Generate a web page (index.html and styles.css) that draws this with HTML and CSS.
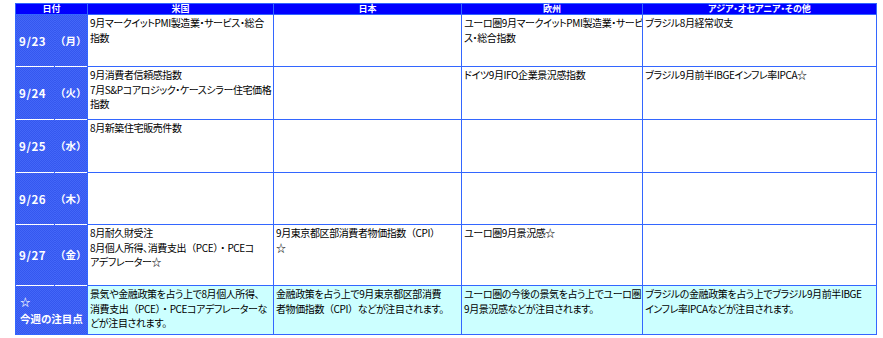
FILE: index.html
```html
<!DOCTYPE html>
<html lang="ja">
<head>
<meta charset="utf-8">
<title>今週の主要経済指標</title>
<link rel="stylesheet" href="styles.css">
</head>
<body>
<table class="cal">
  <colgroup>
    <col class="c-d"><col class="c-w"><col class="c-us"><col class="c-jp"><col class="c-eu"><col class="c-as">
  </colgroup>
  <thead>
    <tr class="hd"><th colspan="2">日付</th><th>米国</th><th>日本</th><th>欧州</th><th>アジア・オセアニア・その他</th></tr>
  </thead>
  <tbody>
    <tr class="r52">
      <td class="d">9/23</td><td class="w">（月）</td>
      <td>9月マークイットPMI製造業・サービス・総合<br>指数</td>
      <td></td>
      <td>ユーロ圏9月マークイットPMI製造業・サービ<br>ス・総合指数</td>
      <td>ブラジル8月経常収支</td>
    </tr>
    <tr class="r53">
      <td class="d">9/24</td><td class="w">（火）</td>
      <td>9月消費者信頼感指数<br>7月S&amp;Pコアロジック・ケースシラー住宅価格<br>指数</td>
      <td></td>
      <td>ドイツ9月IFO企業景況感指数</td>
      <td>ブラジル9月前半IBGEインフレ率IPCA☆</td>
    </tr>
    <tr class="r53">
      <td class="d">9/25</td><td class="w">（水）</td>
      <td>8月新築住宅販売件数</td>
      <td></td>
      <td></td>
      <td></td>
    </tr>
    <tr class="r52">
      <td class="d">9/26</td><td class="w">（木）</td>
      <td></td>
      <td></td>
      <td></td>
      <td></td>
    </tr>
    <tr class="r61">
      <td class="d">9/27</td><td class="w">（金）</td>
      <td>8月耐久財受注<br>8月個人所得、消費支出<span class="fw">（PCE）・</span>PCEコ<br>アデフレーター☆</td>
      <td>9月東京都区部消費者物価指数<span class="fw">（CPI）</span><br>☆</td>
      <td>ユーロ圏9月景況感☆</td>
      <td></td>
    </tr>
    <tr class="r49 note">
      <td class="nl" colspan="2">☆<br>今週の注目点</td>
      <td>景気や金融政策を占う上で8月個人所得、<br>消費支出<span class="fw">（PCE）・</span>PCEコアデフレーターな<br>どが注目されます。</td>
      <td>金融政策を占う上で9月東京都区部消費<br>者物価指数<span class="fw">（CPI）</span>などが注目されます。</td>
      <td>ユーロ圏の今後の景気を占う上でユーロ圏<br>9月景況感などが注目されます。</td>
      <td>ブラジルの金融政策を占う上でブラジル9月前半IBGE<br>インフレ率IPCAなどが注目されます。</td>
    </tr>
  </tbody>
</table>
</body>
</html>
```
FILE: styles.css
```css
html, body {
  margin: 0;
  padding: 0;
  background: #ffffff;
}
body {
  padding: 3px 0 0 15px;
  font-family: "Noto Sans CJK JP", "Noto Sans", sans-serif;
}
.cal {
  box-sizing: border-box;
  width: 862px;
  table-layout: fixed;
  border-collapse: separate;
  border-spacing: 0;
  border-top: 1px solid #3366ff;
  border-left: 1px solid #3366ff;
  font-size: 10px;
  line-height: 14.5px;
  letter-spacing: -0.4px;
  font-feature-settings: "palt";
  color: #000;
}
.c-d { width: 39px; }
.c-w { width: 33px; }
.c-us { width: 186px; }
.c-jp { width: 188px; }
.c-eu { width: 181px; }
.c-as { width: 234px; }

.cal th, .cal td {
  box-sizing: border-box;
  border-right: 1px solid #3366ff;
  border-bottom: 1px solid #3366ff;
  padding: 1px 2px 0 2px;
  vertical-align: top;
  text-align: left;
  white-space: nowrap;
  overflow: hidden;
}
.fw {
  font-feature-settings: normal;
}
.hd th {
  height: 11px;
  padding: 0;
  background: #0000ff;
  color: #fff;
  font-size: 9px;
  line-height: 10px;
  font-weight: bold;
  letter-spacing: 0;
  text-align: center;
  vertical-align: middle;
  overflow: visible;
}
.r52 { height: 52px; }
.r53 { height: 53px; }
.r61 { height: 61px; }
.r49 { height: 49px; }

.cal td.d, .cal td.w {
  border-bottom: 0;
  vertical-align: middle;
  color: #fff;
  font-weight: bold;
  font-size: 11.5px;
  font-feature-settings: normal;
  background:
    linear-gradient(#fff, #fff) left bottom / calc(100% - 1px) 1px no-repeat,
    repeating-conic-gradient(#3457ef 0 25%, #4467f8 0 50%) 0 0 / 2px 2px;
}
.cal td.d {
  border-right: 0;
  padding: 0 0 0 3px;
  letter-spacing: 0.6px;
}
.cal td.w {
  padding: 0;
  font-size: 10.5px;
  letter-spacing: 0;
  background:
    linear-gradient(#fff, #fff) left bottom / 100% 1px no-repeat,
    repeating-conic-gradient(#3457ef 0 25%, #4467f8 0 50%) 0 0 / 2px 2px;
}
.note td {
  background: #ccffff;
}
.cal .note td.nl {
  vertical-align: middle;
  color: #fff;
  font-weight: bold;
  font-size: 10.5px;
  line-height: 17px;
  letter-spacing: 0;
  padding: 0 0 0 4px;
  background: repeating-conic-gradient(#3457ef 0 25%, #4467f8 0 50%) 0 0 / 2px 2px;
}
```
